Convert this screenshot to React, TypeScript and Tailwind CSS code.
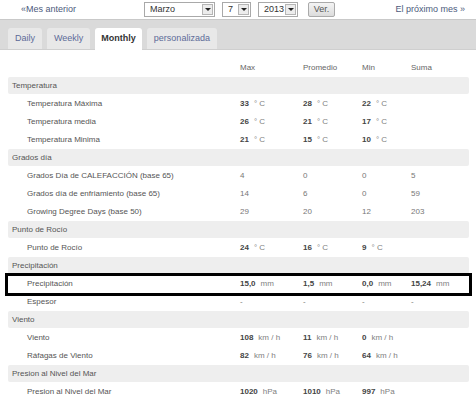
import React from 'react'

type Cell = { v: string; u?: string; b?: boolean } | null

type Row = { label: string; cells: Cell[]; boxed?: boolean }

const c = (v: string, u?: string, b = true): Cell => ({ v, u, b })
const n = (v: string): Cell => ({ v, b: false })

const sections: { title: string; rows: Row[] }[] = [
  {
    title: 'Temperatura',
    rows: [
      { label: 'Temperatura Máxima', cells: [c('33', '° C'), c('28', '° C'), c('22', '° C'), null] },
      { label: 'Temperatura media', cells: [c('26', '° C'), c('21', '° C'), c('17', '° C'), null] },
      { label: 'Temperatura Minima', cells: [c('21', '° C'), c('15', '° C'), c('10', '° C'), null] },
    ],
  },
  {
    title: 'Grados día',
    rows: [
      { label: 'Grados Día de CALEFACCIÓN (base 65)', cells: [n('4'), n('0'), n('0'), n('5')] },
      { label: 'Grados día de enfriamiento (base 65)', cells: [n('14'), n('6'), n('0'), n('59')] },
      { label: 'Growing Degree Days (base 50)', cells: [n('29'), n('20'), n('12'), n('203')] },
    ],
  },
  {
    title: 'Punto de Rocío',
    rows: [{ label: 'Punto de Rocío', cells: [c('24', '° C'), c('16', '° C'), c('9', '° C'), null] }],
  },
  {
    title: 'Precipitación',
    rows: [
      { label: 'Precipitación', cells: [c('15,0', 'mm'), c('1,5', 'mm'), c('0,0', 'mm'), c('15,24', 'mm')], boxed: true },
      { label: 'Espesor', cells: [n('-'), n('-'), n('-'), n('-')] },
    ],
  },
  {
    title: 'Viento',
    rows: [
      { label: 'Viento', cells: [c('108', 'km / h'), c('11', 'km / h'), c('0', 'km / h'), null] },
      { label: 'Ráfagas de Viento', cells: [c('82', 'km / h'), c('76', 'km / h'), c('64', 'km / h'), null] },
    ],
  },
  {
    title: 'Presion al Nivel del Mar',
    rows: [{ label: 'Presion al Nivel del Mar', cells: [c('1020', 'hPa'), c('1010', 'hPa'), c('997', 'hPa'), null] }],
  },
]

const grid = 'grid grid-cols-[232px_63px_59px_49px_1fr] items-center'

function Select({ value, w }: { value: string; w: string }) {
  return (
    <div className={`flex h-[15px] items-stretch border border-[#a9a9a9] bg-white ${w}`}>
      <span className="flex-1 pl-[5px] leading-[13px] text-[#333]">{value}</span>
      <span className="m-px flex w-[11px] items-center justify-center border border-[#b5b5b5] bg-[#ececec]">
        <span className="h-0 w-0 border-x-[3px] border-t-[3px] border-x-transparent border-t-[#222]" />
      </span>
    </div>
  )
}

function TopBar() {
  return (
    <div className="flex h-[19px] items-center text-[9px]">
      <a className="ml-[21px] text-[#4c5a7c]">«Mes anterior</a>
      <div className="ml-[68px] flex items-center gap-[7px]">
        <Select value="Marzo" w="w-[71px]" />
        <Select value="7" w="w-[29px]" />
        <Select value="2013" w="w-[40px]" />
        <button className="ml-[3px] h-[15px] w-[27px] rounded-[2px] border border-[#aaa] bg-gradient-to-b from-[#f4f4f4] to-[#dcdcdc] text-[9px] leading-[13px] text-[#555]">
          Ver.
        </button>
      </div>
      <a className="ml-auto mr-[11px] text-[#4c5a7c]">El próximo mes »</a>
    </div>
  )
}

function Tabs() {
  const tabs = ['Daily', 'Weekly', 'Monthly', 'personalizada']
  return (
    <div className="flex h-[31px] items-end gap-[5px] border-t border-[#c9c9c9] bg-[#dadada] pl-[8px] border-b border-b-[#cfcfcf]">
      {tabs.map((t) =>
        t === 'Monthly' ? (
          <div key={t} className="-mb-px flex h-[22px] items-center rounded-t-[3px] bg-white px-[6px] text-[9px] font-bold text-[#333]">
            {t}
          </div>
        ) : (
          <div key={t} className="flex h-[21px] items-center rounded-t-[3px] bg-[#e8e8e8] px-[7px] text-[9px] text-[#5d6b98]">
            {t}
          </div>
        )
      )}
    </div>
  )
}

function Value({ cell }: { cell: Cell }) {
  if (!cell) return <div />
  return (
    <div className="whitespace-nowrap">
      <span className={cell.b ? 'font-bold text-[#444]' : 'text-[#777]'}>{cell.v}</span>
      {cell.u && <span className="ml-[5px] text-[#808080]">{cell.u}</span>}
    </div>
  )
}

export default function App() {
  return (
    <div className="h-[408px] w-[476px] overflow-hidden bg-white font-['Liberation_Sans',Arial,sans-serif]">
      <TopBar />
      <Tabs />
      <div className="mx-[8px] mt-[9px] w-[461px] text-[8px] text-[#555]">
        <div className={`${grid} h-[18px] text-[#666]`}>
          <div />
          <div>Max</div>
          <div>Promedio</div>
          <div>Min</div>
          <div>Suma</div>
        </div>
        {sections.map((s) => (
          <div key={s.title}>
            <div className="mb-px flex h-[17px] items-center rounded-[2px] bg-[#eeeeee] pl-[4px] text-[#555]">{s.title}</div>
            {s.rows.map((r) => (
              <div key={r.label} className={`${grid} relative h-[18px]`}>
                {r.boxed && (
                  <div className="pointer-events-none absolute -bottom-[3px] -left-[3px] -right-[3px] -top-[2px] border-[3px] border-black" />
                )}
                <div className="pl-[19px] text-[#555]">{r.label}</div>
                {r.cells.map((cell, i) => (
                  <Value key={i} cell={cell} />
                ))}
              </div>
            ))}
          </div>
        ))}
      </div>
    </div>
  )
}
